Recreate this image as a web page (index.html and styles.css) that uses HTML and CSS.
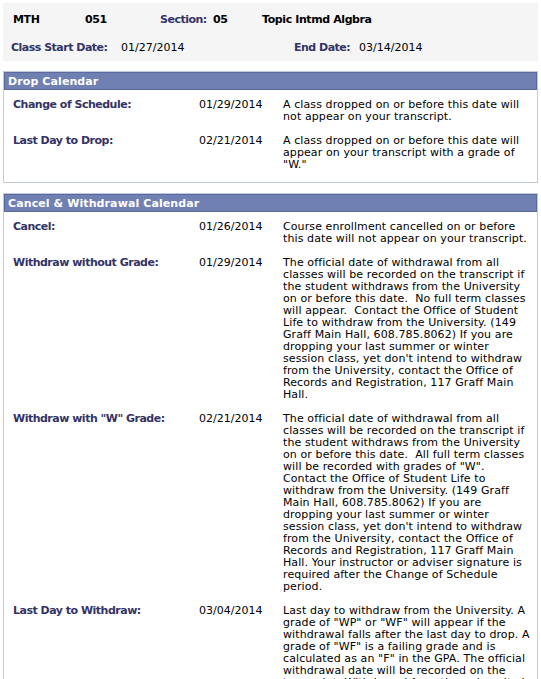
FILE: index.html
```html
<!DOCTYPE html>
<html>
<head>
<meta charset="utf-8">
<link rel="stylesheet" href="styles.css">
</head>
<body>
<div class="summary">
  <div class="sum-row sum-row1">
    <span class="val b c-subj">MTH</span>
    <span class="val b c-num">051</span>
    <span class="lbl c-sec">Section:</span>
    <span class="val b c-secv">05</span>
    <span class="val b">Topic Intmd Algbra</span>
  </div>
  <div class="sum-row sum-row2">
    <span class="lbl c-start">Class Start Date:</span>
    <span class="val c-startv">01/27/2014</span>
    <span class="lbl c-end">End Date:</span>
    <span class="val">03/14/2014</span>
  </div>
</div>

<div class="box box-drop">
  <div class="box-head">Drop Calendar</div>
  <div class="rows">
    <div class="row">
      <div class="lbl">Change of Schedule:</div>
      <div class="date">01/29/2014</div>
      <div class="desc">A class dropped on or before this date will<br>not appear on your transcript.</div>
    </div>
    <div class="row">
      <div class="lbl">Last Day to Drop:</div>
      <div class="date">02/21/2014</div>
      <div class="desc">A class dropped on or before this date will<br>appear on your transcript with a grade of<br>"W."</div>
    </div>
  </div>
</div>

<div class="box box-cancel">
  <div class="box-head">Cancel &amp; Withdrawal Calendar</div>
  <div class="rows">
    <div class="row">
      <div class="lbl">Cancel:</div>
      <div class="date">01/26/2014</div>
      <div class="desc">Course enrollment cancelled on or before<br>this date will not appear on your transcript.</div>
    </div>
    <div class="row">
      <div class="lbl">Withdraw without Grade:</div>
      <div class="date">01/29/2014</div>
      <div class="desc">The official date of withdrawal from all<br>classes will be recorded on the transcript if<br>the student withdraws from the University<br>on or before this date.&nbsp; No full term classes<br>will appear.&nbsp; Contact the Office of Student<br>Life to withdraw from the University. (149<br>Graff Main Hall, 608.785.8062) If you are<br>dropping your last summer or winter<br>session class, yet don't intend to withdraw<br>from the University, contact the Office of<br>Records and Registration, 117 Graff Main<br>Hall.</div>
    </div>
    <div class="row">
      <div class="lbl">Withdraw with "W" Grade:</div>
      <div class="date">02/21/2014</div>
      <div class="desc">The official date of withdrawal from all<br>classes will be recorded on the transcript if<br>the student withdraws from the University<br>on or before this date.&nbsp; All full term classes<br>will be recorded with grades of "W".<br>Contact the Office of Student Life to<br>withdraw from the University. (149 Graff<br>Main Hall, 608.785.8062) If you are<br>dropping your last summer or winter<br>session class, yet don't intend to withdraw<br>from the University, contact the Office of<br>Records and Registration, 117 Graff Main<br>Hall. Your instructor or adviser signature is<br>required after the Change of Schedule<br>period.</div>
    </div>
    <div class="row">
      <div class="lbl">Last Day to Withdraw:</div>
      <div class="date">03/04/2014</div>
      <div class="desc">Last day to withdraw from the University. A<br>grade of "WP" or "WF" will appear if the<br>withdrawal falls after the last day to drop. A<br>grade of "WF" is a failing grade and is<br>calculated as an "F" in the GPA. The official<br>withdrawal date will be recorded on the<br>transcript. Withdrawal from the university is<br>not permitted after this date.</div>
    </div>
  </div>
</div>
</body>
</html>
```

FILE: styles.css
```css
html, body {
  margin: 0;
  padding: 0;
  background: #ffffff;
}
body {
  padding: 3px;
  font-family: "DejaVu Sans", Verdana, sans-serif;
  font-size: 11px;
  line-height: 12px;
  color: #000000;
}
.lbl {
  color: #333366;
  font-weight: bold;
  letter-spacing: -0.5px;
}
.b {
  font-weight: bold;
  letter-spacing: -0.4px;
}

.summary {
  width: 535px;
  height: 58px;
  background: #f5f5f5;
  box-sizing: border-box;
  padding: 11px 0 0 8px;
}
.sum-row {
  display: flex;
  align-items: baseline;
  white-space: nowrap;
}
.sum-row1 { padding-left: 2px; }
.sum-row2 { margin-top: 16px; }
.c-subj { width: 72px; }
.c-num { width: 75px; }
.c-sec { width: 53px; }
.c-secv { width: 49px; }
.c-start { width: 110px; }
.c-startv { width: 173px; }
.c-end { width: 65px; }

.box {
  width: 535px;
  box-sizing: border-box;
  border: 1px solid #c3c9dd;
}
.box-drop { margin-top: 10px; }
.box-cancel { margin-top: 10px; }
.box-head {
  background: #7080b3;
  border: 1px solid #5a6a9d;
  color: #ffffff;
  font-weight: bold;
  height: 18px;
  box-sizing: border-box;
  padding: 2px 0 0 3px;
  line-height: 13px;
  letter-spacing: 0.1px;
}
.rows {
  padding: 9px 0 11px 9px;
}
.row {
  display: grid;
  grid-template-columns: 186px 84px 250px;
}
.row + .row { margin-top: 12px; }
.desc {
  white-space: nowrap;
  letter-spacing: 0.1px;
}
```
